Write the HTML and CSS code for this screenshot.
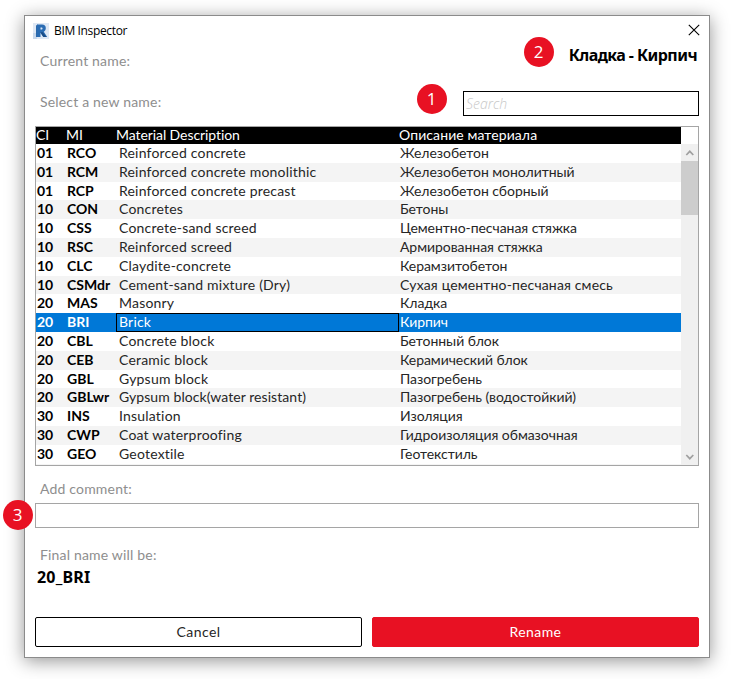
FILE: index.html
```html
<!DOCTYPE html>
<html lang="en">
<head>
<meta charset="utf-8">
<title>BIM Inspector</title>
<link rel="stylesheet" href="styles.css">
</head>
<body>
<main class="window">
  <header class="titlebar">
    <svg class="logo" width="16" height="16" viewBox="0 0 16 16"><path fill="#dfe8f4" d="M0 0h16v16H0z"/><path fill="#c8d8ec" d="M0 10h4v6H0z"/><path fill="#2d69aa" d="M3 2.500l2-1V14H3z"/><path fill="#2a6cb3" fill-rule="evenodd" d="M4 1.500h5C11.500 1.500 12.800 3 12.800 5c0 1.800-.7 3-2 3.700L14.200 14h-4L7.500 9.800V14H4V3zM7.500 4.500v2h1c.7 0 1-.4 1-1s-.3-1-1-1z"/><path fill="#1b4d86" d="M7.500 9.500L9.500 9l4 5H10.500z"/></svg>
    <span class="title">BIM Inspector</span>
    <svg class="close" width="12" height="12" viewBox="0 0 12 12"><path d="M.8.8l10.400 10.400M11.200.8L.8 11.200" stroke="#000" stroke-width="1.100" fill="none"/></svg>
  </header>
  <section class="current">
    <span class="label l-current">Current name:</span>
    <strong class="current-name">Кладка - Кирпич</strong>
  </section>
  <section class="select">
    <span class="label l-select">Select a new name:</span>
    <div class="search"><span>Search</span></div>
  </section>
  <section class="table">
    <div class="grid">
      <div class="head"><span>CI</span><span>MI</span><span class="h-en">Material Description</span><span class="h-ru">Описание материала</span></div>
      <div class="row"><b>01</b><b>RCO</b><span class="en">Reinforced concrete</span><span class="ru">Железобетон</span></div>
      <div class="row"><b>01</b><b>RCM</b><span class="en">Reinforced concrete monolithic</span><span class="ru">Железобетон монолитный</span></div>
      <div class="row"><b>01</b><b>RCP</b><span class="en">Reinforced concrete precast</span><span class="ru">Железобетон сборный</span></div>
      <div class="row"><b>10</b><b>CON</b><span class="en">Concretes</span><span class="ru">Бетоны</span></div>
      <div class="row"><b>10</b><b>CSS</b><span class="en">Concrete-sand screed</span><span class="ru">Цементно-песчаная стяжка</span></div>
      <div class="row"><b>10</b><b>RSC</b><span class="en">Reinforced screed</span><span class="ru">Армированная стяжка</span></div>
      <div class="row"><b>10</b><b>CLC</b><span class="en">Claydite-concrete</span><span class="ru">Керамзитобетон</span></div>
      <div class="row"><b>10</b><b>CSMdr</b><span class="en">Cement-sand mixture (Dry)</span><span class="ru wide">Сухая цементно-песчаная смесь</span></div>
      <div class="row"><b>20</b><b>MAS</b><span class="en">Masonry</span><span class="ru">Кладка</span></div>
      <div class="row selected"><b>20</b><b>BRI</b><span class="en">Brick</span><span class="ru">Кирпич</span></div>
      <div class="row"><b>20</b><b>CBL</b><span class="en">Concrete block</span><span class="ru">Бетонный блок</span></div>
      <div class="row"><b>20</b><b>CEB</b><span class="en">Ceramic block</span><span class="ru">Керамический блок</span></div>
      <div class="row"><b>20</b><b>GBL</b><span class="en">Gypsum block</span><span class="ru">Пазогребень</span></div>
      <div class="row"><b>20</b><b>GBLwr</b><span class="en tight">Gypsum block(water resistant)</span><span class="ru">Пазогребень (водостойкий)</span></div>
      <div class="row"><b>30</b><b>INS</b><span class="en">Insulation</span><span class="ru">Изоляция</span></div>
      <div class="row"><b>30</b><b>CWP</b><span class="en">Coat waterproofing</span><span class="ru">Гидроизоляция обмазочная</span></div>
      <div class="row"><b>30</b><b>GEO</b><span class="en">Geotextile</span><span class="ru">Геотекстиль</span></div>
      <div class="row"></div>
    </div>
    <div class="scrollbar">
      <svg class="arrow" width="17" height="17" viewBox="0 0 17 17"><path d="M5.300 11l3.500-3.700L12.300 11" stroke="#a0a0a0" stroke-width="1.700" fill="none"/></svg>
      <div class="thumb"></div>
      <svg class="arrow down" width="17" height="17" viewBox="0 0 17 17"><path d="M5.300 7l3.500 3.700L12.300 7" stroke="#a0a0a0" stroke-width="1.700" fill="none"/></svg>
    </div>
  </section>
  <span class="label l-comment">Add comment:</span>
  <div class="comment"></div>
  <span class="label l-final">Final name will be:</span>
  <strong class="final-name">20_BRI</strong>
  <footer class="actions">
    <button class="btn cancel">Cancel</button>
    <button class="btn rename">Rename</button>
  </footer>
  <span class="badge one">1</span>
  <span class="badge two">2</span>
  <span class="badge three">3</span>
</main>
</body>
</html>
```
FILE: styles.css
```css
* { box-sizing: border-box; }
body {
  margin: 0;
  padding: 15px 0 0 24px;
  height: 679px;
  overflow: hidden;
  background: #fff;
  font-family: Lato, "Noto Sans", sans-serif;
  font-size: 14px;
}
.window {
  position: relative;
  width: 686px;
  height: 643px;
  padding: 0 10px;
  border: 1px solid #8b8b8b;
  background: #fff;
  box-shadow: 0 3px 17px rgba(0, 0, 0, .42);
  display: flex;
  flex-direction: column;
}
.titlebar {
  height: 29px;
  margin: 0 -1px 0 -2px;
  display: flex;
  align-items: center;
  flex: none;
}
.title {
  margin-left: 5px;
  flex: 1;
  color: #000;
  font: 12px/16px "Open Sans", "Noto Sans", sans-serif;
  letter-spacing: -.35px;
}
.close { margin-bottom: 2px; }
.label {
  display: block;
  flex: none;
  align-self: flex-start;
  margin-left: 5px;
  color: #8e8e8e;
  letter-spacing: .18px;
  line-height: 20px;
  white-space: nowrap;
}
.current {
  height: 38px;
  display: flex;
  justify-content: space-between;
  flex: none;
}
.l-current { margin-top: 6px; }
.current-name {
  margin: 0 2px 0 0;
  font: bold 16px/20px "Noto Sans", sans-serif;
  letter-spacing: -.57px;
  color: #000;
  white-space: nowrap;
}
.select {
  height: 43px;
  padding-top: 8px;
  display: flex;
  justify-content: space-between;
  flex: none;
}
.l-select { margin-top: 1px; }
.search {
  width: 236px;
  height: 25px;
  padding-left: 2px;
  border: 1px solid #000;
  color: #c8c8c8;
  font-style: italic;
  font-family: "Open Sans", sans-serif;
  font-weight: 300;
  line-height: 23px;
}
.table {
  width: 664px;
  height: 340px;
  border: 1px solid #a5a5a5;
  display: flex;
  overflow: hidden;
  flex: none;
}
.grid { width: 645px; flex: none; color: #262626; }
.head, .row {
  display: grid;
  grid-template-columns: 30px 50px 283px 1fr;
  white-space: nowrap;
}
.head {
  height: 17px;
  background: #000;
  color: #fff;
  line-height: 16px;
}
.h-en { letter-spacing: -.08px; }
.h-ru { letter-spacing: .1px; }
.row { height: 18.8px; line-height: 18.8px; }
.row:nth-child(odd) { background: #f4f4f4; }
.row b { padding-left: 1px; color: #000; }
.en { padding-left: 3px; letter-spacing: .2px; }
.en.tight { letter-spacing: .07px; }
.ru { padding-left: 1px; letter-spacing: -.05px; }
.ru.wide { letter-spacing: .15px; }
.row.selected { background: #0078d7; color: #fff; }
.row.selected b { color: #fff; }
.selected .en { box-shadow: inset 0 0 0 1px #000; }
.scrollbar {
  width: 17px;
  height: 321px;
  margin-top: 17px;
  display: flex;
  flex-direction: column;
  background: #f0f0f0;
}
.arrow { flex: none; }
.down { margin-top: auto; }
.thumb { height: 54px; background: #cdcdcd; }
.l-comment { margin-top: 13px; }
.comment {
  width: 664px;
  height: 25px;
  margin-top: 4px;
  border: 1px solid #a5a5a5;
  flex: none;
}
.l-final { margin-top: 17px; }
.final-name {
  margin: 2px 0 0 2px;
  font: bold 16px/20px "Noto Sans", sans-serif;
  letter-spacing: .2px;
  color: #000;
}
.actions {
  width: 664px;
  margin-top: 30px;
  display: flex;
  gap: 10px;
}
.btn {
  flex: 1;
  height: 30px;
  padding: 0;
  border: 1px solid #000;
  border-radius: 2px;
  background: #fff;
  color: #262626;
  font: 14px/28px Lato, sans-serif;
  letter-spacing: .4px;
}
.rename { border-color: #e81123; background: #e81123; color: #fff; }
.badge {
  position: absolute;
  width: 30px;
  height: 30px;
  border-radius: 50%;
  background: #e81123;
  color: #fff;
  font: 17px/29px "Open Sans", sans-serif;
  padding-right: 1px;
  text-align: center;
}
.one { left: 392px; top: 68px; }
.two { left: 499px; top: 21px; }
.three { left: -22px; top: 484px; }
```
